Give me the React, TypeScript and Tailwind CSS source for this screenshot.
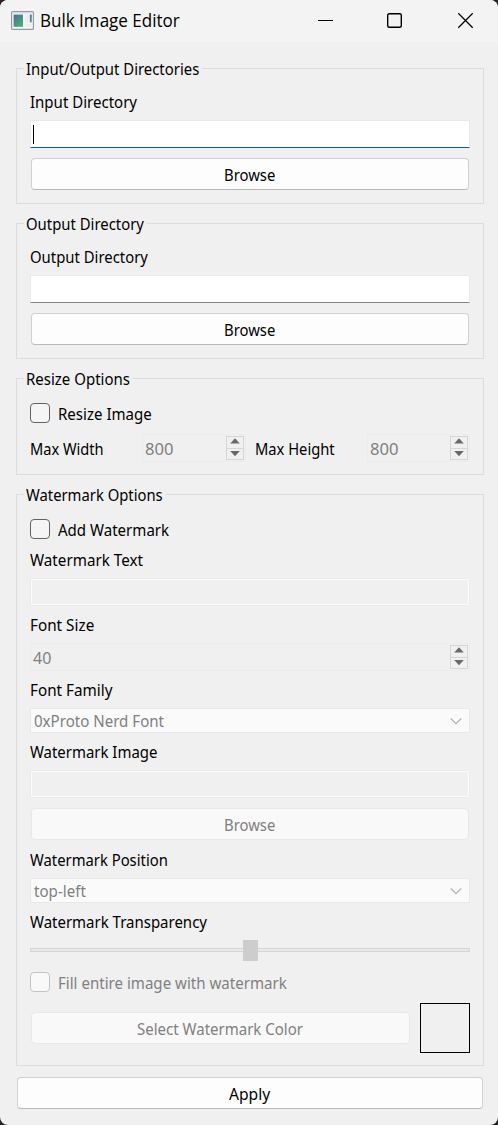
import { useLayoutEffect, useRef, type ReactNode } from "react";
import clsx from "clsx";

/** A single line of UI text, condensed to the given width. */
function Text({ w, dim, title, children }: { w: number; dim?: boolean; title?: boolean; children: string }) {
  const ref = useRef<HTMLSpanElement>(null);
  useLayoutEffect(() => {
    const el = ref.current;
    if (el) el.style.transform = `scaleX(${w / el.offsetWidth})`;
  }, [w, children]);
  return (
    <span className="block shrink-0" style={{ width: w }}>
      <span
        ref={ref}
        className={clsx(
          "inline-block origin-left whitespace-nowrap leading-6",
          title ? "font-['Open_Sans',sans-serif] text-[18px]" : "font-['Noto_Sans',sans-serif] text-[16px]",
          dim ? "text-[#808080]" : "text-black",
        )}
      >
        {children}
      </span>
    </span>
  );
}

function Group({ title, w, className, children }: { title: string; w: number; className: string; children: ReactNode }) {
  return (
    <section className={clsx("relative flex shrink-0 flex-col border border-[#dcdcdc] px-[13px]", className)}>
      <div className="absolute -top-3 left-[7px] bg-[#f0f0f0] pr-[3px] pl-[2px]">
        <Text w={w}>{title}</Text>
      </div>
      {children}
    </section>
  );
}

function Button({ w, label, disabled, className }: { w: number; label: string; disabled?: boolean; className?: string }) {
  return (
    <button
      disabled={disabled}
      className={clsx(
        "flex h-8 shrink-0 items-center justify-center rounded-[4px] border pt-px pr-[2px]",
        disabled ? "border-[#e8e8e8] bg-[#f9f9f9]" : "border-[#d0d0d0] border-b-[#b9b9b9] bg-[#fdfdfd]",
        className,
      )}
    >
      <Text w={w} dim={disabled}>{label}</Text>
    </button>
  );
}

function CheckBox({ w, label, disabled }: { w: number; label: string; disabled?: boolean }) {
  return (
    <label className="flex h-5 shrink-0 items-center gap-2">
      <span
        className={clsx(
          "size-5 rounded-[4px] border",
          disabled ? "border-[#c3c3c3] bg-[#f9f9f9]" : "border-[#626262] bg-[#f5f5f5]",
        )}
      />
      <span className="pt-[2px]">
        <Text w={w} dim={disabled}>{label}</Text>
      </span>
    </label>
  );
}

function SpinBox({ w, value, className }: { w: number; value: string; className: string }) {
  return (
    <div className={clsx("flex h-7 shrink-0 items-center justify-between border border-[#ececec] pr-px pl-[2px]", className)}>
      <div className="pt-[2px]">
        <Text w={w} dim>{value}</Text>
      </div>
      <div className="flex h-6 w-[18px] flex-col border border-[#d5d5d5]">
        <div className="flex h-3 items-start justify-center border-b border-[#d5d5d5] pt-px">
          <svg width="10" height="6" viewBox="0 0 10 6"><path d="M0.2 5.4 5 0.2 9.8 5.4Z" fill="#696969" /></svg>
        </div>
        <div className="flex justify-center pt-[2px]">
          <svg width="10" height="6" viewBox="0 0 10 6"><path d="M0.2 0 5 5.2 9.8 0Z" fill="#696969" /></svg>
        </div>
      </div>
    </div>
  );
}

function ComboBox({ w, value, className }: { w: number; value: string; className: string }) {
  return (
    <div className={clsx("flex h-[25px] shrink-0 items-center justify-between border border-[#e9e9e9] bg-[#fafafa] pr-[7px] pl-[3px]", className)}>
      <div className="pt-px">
        <Text w={w} dim>{value}</Text>
      </div>
      <svg width="12" height="8" viewBox="0 0 12 8" fill="none" stroke="#b0b0b0" strokeWidth="1.1">
        <path d="M0.8 1.5 6 6.7 11.2 1.5" />
      </svg>
    </div>
  );
}

function DirectoryFields({ w, label, focused }: { w: number; label: string; focused?: boolean }) {
  return (
    <>
      <div className="mt-[21px]"><Text w={w}>{label}</Text></div>
      <div
        className={clsx(
          "mt-[6px] h-7 shrink-0 border border-[#e9e9e9] bg-white pt-1 pl-[2px]",
          focused ? "border-b-[#005fb8]" : "border-b-[#868686]",
        )}
      >
        {focused && <div className="h-[19px] w-px bg-black" />}
      </div>
      <Button w={51} label="Browse" className="mx-px mt-[10px]" />
    </>
  );
}

function DisabledInput({ className }: { className: string }) {
  return <div className={clsx("mx-px h-[26px] shrink-0 border border-[#fcfcfc] outline outline-[#ebebeb]", className)} />;
}

function TitleBar() {
  return (
    <header className="flex h-[43px] shrink-0 items-center bg-[#f3f3f3] pl-[11px]">
      <svg width="23" height="19" viewBox="0 0 23 19" className="-mt-[3px]">
        <defs>
          <linearGradient id="screen" x1="0" y1="0" x2="0.7" y2="1">
            <stop offset="0" stopColor="#3c7398" />
            <stop offset="1" stopColor="#58a873" />
          </linearGradient>
        </defs>
        <rect x="0.6" y="0.6" width="21.8" height="17.8" rx="1" fill="#f7f9fa" stroke="#939aa1" strokeWidth="1.2" />
        <rect x="1.2" y="1.2" width="20.6" height="1.4" fill="#d5dadf" />
        <rect x="2.6" y="3.6" width="9.4" height="12.2" fill="url(#screen)" />
        <rect x="13.7" y="3.6" width="4" height="7.8" fill="#eeecee" />
        <rect x="18.8" y="3.6" width="2" height="7.8" fill="url(#screen)" />
        <rect x="13.7" y="12.6" width="7.1" height="3.2" fill="#eeecee" />
      </svg>
      <div className="-mt-[3px] ml-[6px]"><Text w={140} title>Bulk Image Editor</Text></div>
      <svg width="158" height="16" viewBox="0 0 158 16" className="-mt-[2px] ml-[137px]" fill="none" stroke="#000" strokeWidth="1.3">
        <path d="M1 7.5H16" strokeWidth="1" />
        <rect x="70.7" y="0.7" width="13.6" height="13.6" rx="1.5" strokeWidth="1.4" />
        <path d="M141.3 0.3 155.7 14.7M155.7 0.3 141.3 14.7" />
      </svg>
    </header>
  );
}

export default function App() {
  return (
    <div className="h-[1125px] w-[498px] bg-[#252525]">
      <div className="flex h-full flex-col overflow-hidden rounded-[8px] bg-[#f0f0f0]">
        <TitleBar />
        <main className="flex flex-col pt-[25px] pr-[14px] pl-4">
          <Group title="Input/Output Directories" w={173} className="h-[136px]">
            <DirectoryFields label="Input Directory" w={107} focused />
          </Group>

          <Group title="Output Directory" w={118} className="mt-[19px] h-[136px]">
            <DirectoryFields label="Output Directory" w={118} />
          </Group>

          <Group title="Resize Options" w={104} className="mt-[19px] h-[97px] pt-6">
            <CheckBox label="Resize Image" w={94} />
            <div className="mt-[11px] flex items-center">
              <div className="w-28 pt-[2px]"><Text w={74}>Max Width</Text></div>
              <SpinBox w={28} value="800" className="w-[104px]" />
              <div className="ml-[9px] w-28 pt-[2px]"><Text w={80}>Max Height</Text></div>
              <SpinBox w={28} value="800" className="w-[103px]" />
            </div>
          </Group>

          <Group title="Watermark Options" w={137} className="mt-[19px] h-[572px] pt-6">
            <CheckBox label="Add Watermark" w={111} />
            <div className="mt-[9px]"><Text w={113}>Watermark Text</Text></div>
            <DisabledInput className="mt-[7px]" />
            <div className="mt-[8px]"><Text w={64}>Font Size</Text></div>
            <SpinBox w={18} value="40" className="mt-[6px]" />
            <div className="mt-[7px]"><Text w={82}>Font Family</Text></div>
            <ComboBox w={130} value="0xProto Nerd Font" className="mt-[6px]" />
            <div className="mt-[7px]"><Text w={127}>Watermark Image</Text></div>
            <DisabledInput className="mt-[7px]" />
            <Button w={51} label="Browse" disabled className="mx-px mt-[11px]" />
            <div className="mt-[8px]"><Text w={138}>Watermark Position</Text></div>
            <ComboBox w={52} value="top-left" className="mt-[6px]" />
            <div className="mt-[7px]"><Text w={177}>Watermark Transparency</Text></div>
            <div className="mt-[6px] flex h-[21px] shrink-0 items-start">
              <div className="mt-2 h-1 w-[213px] border border-r-0 border-[#d4d6d6] bg-[#e7eaea]" />
              <div className="h-[21px] w-[15px] bg-[#cdcdcd]" />
              <div className="mt-2 h-1 flex-1 border border-l-0 border-[#d4d6d6] bg-[#e7eaea]" />
            </div>
            <div className="mt-[11px]">
              <CheckBox label="Fill entire image with watermark" w={229} disabled />
            </div>
            <div className="mt-[11px] flex items-center gap-[10px] pl-px">
              <Button w={166} label="Select Watermark Color" disabled className="flex-1" />
              <div className="size-[50px] shrink-0 border border-black" />
            </div>
          </Group>

          <Button w={41} label="Apply" className="mx-px mt-[11px]" />
        </main>
      </div>
    </div>
  );
}
